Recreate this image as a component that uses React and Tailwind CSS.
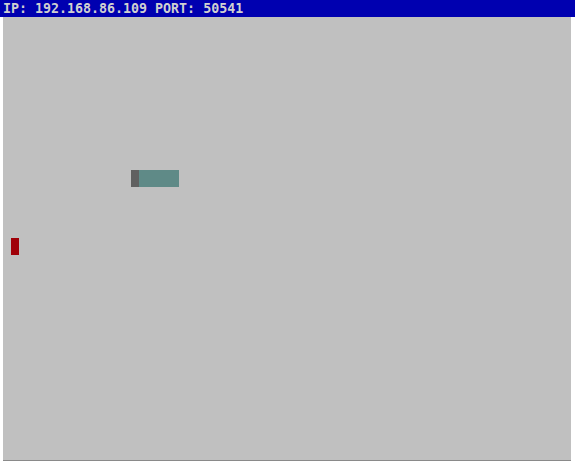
export default function App() {
  return (
    <div className="w-[575px] h-[462px] bg-white overflow-hidden">
      <div
        className="h-[17px] bg-[#0000b0] text-[#d0d0d0] text-[13.3px] leading-[17px] pl-[3px] font-bold whitespace-pre"
        style={{ fontFamily: '"DejaVu Sans Mono", "Liberation Mono", monospace' }}
      >
        IP: 192.168.86.109 PORT: 50541
      </div>
      <div className="ml-[3px] w-[568px] h-[444px] bg-[#c0c0c0] border-b border-[#8a8a8a] relative">
        {/* paddle */}
        <div className="absolute left-[128px] top-[153px] w-[48px] h-[17px] flex">
          <div className="w-[8px] h-full bg-[#606060]" />
          <div className="flex-1 h-full bg-[#5f8a87]" />
        </div>
        {/* ball */}
        <div className="absolute left-[8px] top-[221px] w-[8px] h-[17px] bg-[#a00008]" />
      </div>
    </div>
  );
}
